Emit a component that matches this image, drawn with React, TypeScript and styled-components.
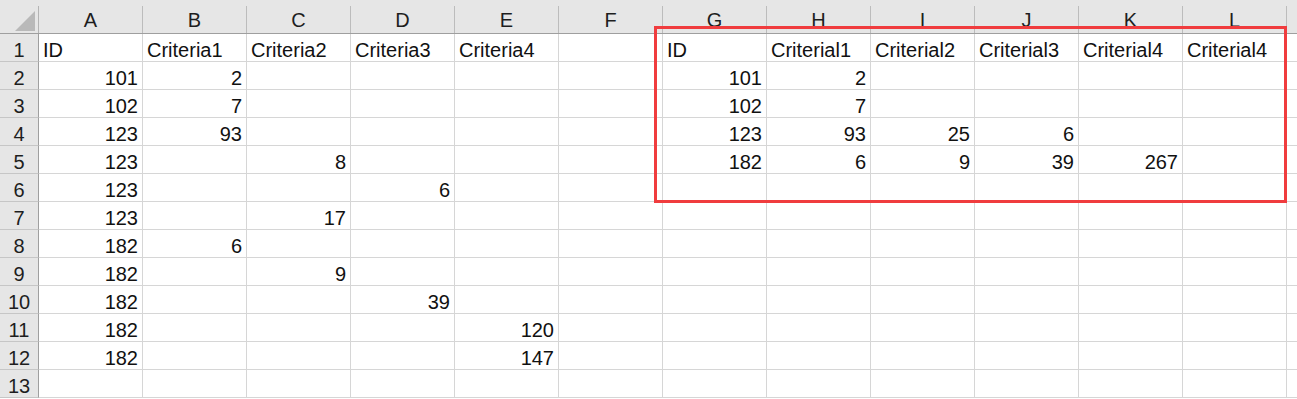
import React from "react";
import styled, { createGlobalStyle } from "styled-components";

const GlobalStyle = createGlobalStyle`
  html, body {
    margin: 0;
    padding: 0;
    background: #ffffff;
    overflow: hidden;
  }
`;

// M is only a sliver at the right edge, its letter falls outside the window
const COLS = ["A", "B", "C", "D", "E", "F", "G", "H", "I", "J", "K", "L", "M"];
const VISIBLE_LABELS = new Set(COLS.slice(0, 12));
const COL_W = 104;
const ROW_H = 28;

// sheet contents, keyed by row then column letter
const cells: Record<number, Record<string, string>> = {
  1: {
    A: "ID",
    B: "Criteria1",
    C: "Criteria2",
    D: "Criteria3",
    E: "Criteria4",
    G: "ID",
    H: "Criterial1",
    I: "Criterial2",
    J: "Criterial3",
    K: "Criterial4",
    L: "Criterial4",
  },
  2: { A: "101", B: "2", G: "101", H: "2" },
  3: { A: "102", B: "7", G: "102", H: "7" },
  4: { A: "123", B: "93", G: "123", H: "93", I: "25", J: "6" },
  5: { A: "123", C: "8", G: "182", H: "6", I: "9", J: "39", K: "267" },
  6: { A: "123", D: "6" },
  7: { A: "123", C: "17" },
  8: { A: "182", B: "6" },
  9: { A: "182", C: "9" },
  10: { A: "182", D: "39" },
  11: { A: "182", E: "120" },
  12: { A: "182", E: "147" },
  13: {},
};

const Sheet = styled.div`
  position: relative;
  width: 1297px;
  height: 399px;
  overflow: hidden;
  font-family: "Liberation Sans", Arial, sans-serif;
  font-size: 20px;
  color: #111111;
`;

const HeaderRow = styled.div`
  display: flex;
  height: 34px;
  background: #e6e6e6;
  border-bottom: 1px solid #9f9f9f;
  box-sizing: border-box;
`;

const Corner = styled.div`
  position: relative;
  flex: 0 0 39px;
  border-right: 1px solid #b4b4b4;
  box-sizing: border-box;
  margin-top: 6px;

  &::after {
    content: "";
    position: absolute;
    right: 3px;
    bottom: 2px;
    width: 0;
    height: 0;
    border-left: 20px solid transparent;
    border-bottom: 20px solid #b9b9b9;
  }
`;

const ColHead = styled.div`
  flex: 0 0 ${COL_W}px;
  display: flex;
  align-items: flex-end;
  justify-content: center;
  margin-top: 6px;
  border-right: 1px solid #bcbcbc;
  box-sizing: border-box;
  line-height: 20px;
  padding-bottom: 3px;
  color: #1e1e1e;
`;

const Row = styled.div`
  display: flex;
  height: ${ROW_H}px;
`;

const RowHead = styled.div`
  flex: 0 0 39px;
  display: flex;
  align-items: flex-end;
  justify-content: center;
  background: #e6e6e6;
  border-right: 1px solid #9f9f9f;
  border-bottom: 1px solid #c6c6c6;
  box-sizing: border-box;
  line-height: 20px;
  padding-bottom: 1px;
  color: #1e1e1e;
`;

const Cell = styled.div<{ $num: boolean }>`
  flex: 0 0 ${COL_W}px;
  display: flex;
  align-items: flex-end;
  justify-content: ${(p) => (p.$num ? "flex-end" : "flex-start")};
  border-right: 1px solid #d6d6d6;
  border-bottom: 1px solid #d6d6d6;
  box-sizing: border-box;
  padding: 0 4px 1px 4px;
  line-height: 20px;
  white-space: nowrap;
`;

const Highlight = styled.div`
  position: absolute;
  left: 654px;
  top: 26px;
  width: 633px;
  height: 177px;
  border: 3px solid #f03c3e;
  box-sizing: border-box;
  pointer-events: none;
`;

export default function App() {
  const rows = Object.keys(cells).map(Number);
  return (
    <>
      <GlobalStyle />
      <Sheet>
        <HeaderRow>
          <Corner />
          {COLS.map((c) => (
            <ColHead key={c}>{VISIBLE_LABELS.has(c) ? c : ""}</ColHead>
          ))}
        </HeaderRow>
        {rows.map((r) => (
          <Row key={r}>
            <RowHead>{r}</RowHead>
            {COLS.map((c) => {
              const v = cells[r][c] ?? "";
              return (
                <Cell key={c} $num={/^\d+$/.test(v)}>
                  {v}
                </Cell>
              );
            })}
          </Row>
        ))}
        <Highlight />
      </Sheet>
    </>
  );
}
